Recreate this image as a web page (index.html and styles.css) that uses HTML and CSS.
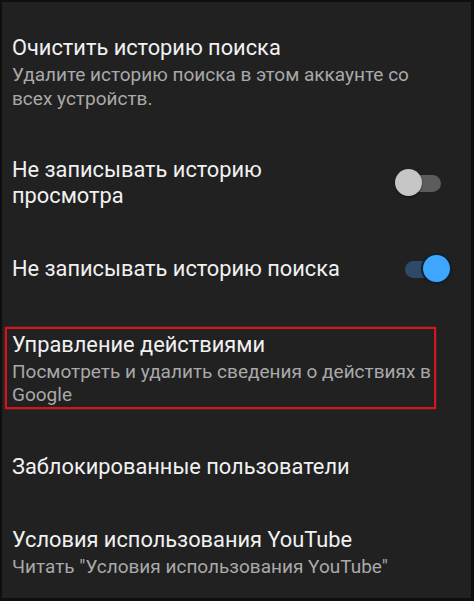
FILE: index.html
```html
<!DOCTYPE html>
<html lang="ru">
<head>
    <meta charset="UTF-8">
    <meta name="viewport" content="width=device-width, initial-scale=1.0">
    <title>История и конфиденциальность</title>
    <link rel="stylesheet" href="styles.css">
</head>
<body>
    <div class="screen">
        <div class="settings-list">

            <div class="item">
                <div class="item-text">
                    <div class="item-title">Очистить историю поиска</div>
                    <div class="item-sub">Удалите историю поиска в этом аккаунте со всех устройств.</div>
                </div>
            </div>

            <div class="item item-toggle">
                <div class="item-text narrow">
                    <div class="item-title">Не записывать историю просмотра</div>
                </div>
                <div class="switch"><span class="track"></span><span class="thumb"></span></div>
            </div>

            <div class="item item-toggle">
                <div class="item-text">
                    <div class="item-title">Не записывать историю поиска</div>
                </div>
                <div class="switch on"><span class="track"></span><span class="thumb"></span></div>
            </div>

            <div class="item item-marked">
                <div class="marked-box">
                    <div class="item-title">Управление действиями</div>
                    <div class="item-sub tight">Посмотреть и удалить сведения о действиях в Google</div>
                </div>
            </div>

            <div class="item item-single">
                <div class="item-text">
                    <div class="item-title">Заблокированные пользователи</div>
                </div>
            </div>

            <div class="item">
                <div class="item-text">
                    <div class="item-title">Условия использования YouTube</div>
                    <div class="item-sub">Читать "Условия использования YouTube"</div>
                </div>
            </div>

        </div>
    </div>
</body>
</html>
```

FILE: styles.css
```css
html {
    background: #0f0f0f;
}

body {
    margin: 0;
    font-family: Roboto, 'Noto Sans', sans-serif;
    color: #f1f1f1;
}

.screen {
    margin: 2px 3px 3px 2px;
    height: calc(100vh - 5px);
    background: #212121;
    overflow: hidden;
}

.settings-list {
    padding-top: 10px;
}

.item {
    padding: 23px 35px 23px 10px;
}

.item-toggle {
    display: flex;
    align-items: center;
    justify-content: space-between;
    padding-right: 21px;
}

.item-single {
    padding-bottom: 24px;
    padding-top: 24px;
}

.item-text.narrow {
    max-width: 300px;
}

.item-title {
    font-size: 21.8px;
    line-height: 26px;
    color: #f1f1f1;
}

.item-sub {
    margin-top: 2px;
    font-size: 19px;
    line-height: 24px;
    color: #a9a9a9;
}

.item-sub.tight {
    line-height: 23px;
}

/* red annotation frame */
.item-marked {
    padding-top: 21px;
    padding-bottom: 21px;
}

.marked-box {
    margin-left: -7px;
    padding: 3px 0 1px 5px;
    border: 2px solid #d1161f;
    box-shadow: 0 0 2px rgba(255, 40, 40, 0.5);
}

/* switches */
.switch {
    position: relative;
    width: 55px;
    height: 28px;
    flex-shrink: 0;
}

.track {
    position: absolute;
    left: 10px;
    top: 6px;
    width: 36px;
    height: 17px;
    border-radius: 9px;
    background: #5c5c5c;
}

.thumb {
    position: absolute;
    left: 0;
    top: 0;
    width: 27px;
    height: 27px;
    border-radius: 50%;
    background: #c6c6c6;
    box-shadow: 0 1px 2px rgba(0, 0, 0, 0.5);
}

.switch.on .track {
    background: #2e4a66;
}

.switch.on .thumb {
    left: 28px;
    background: #3ea6ff;
    box-shadow: 0 0 0 2px #10202e, 0 1px 3px rgba(0, 0, 0, 0.6);
}
```
